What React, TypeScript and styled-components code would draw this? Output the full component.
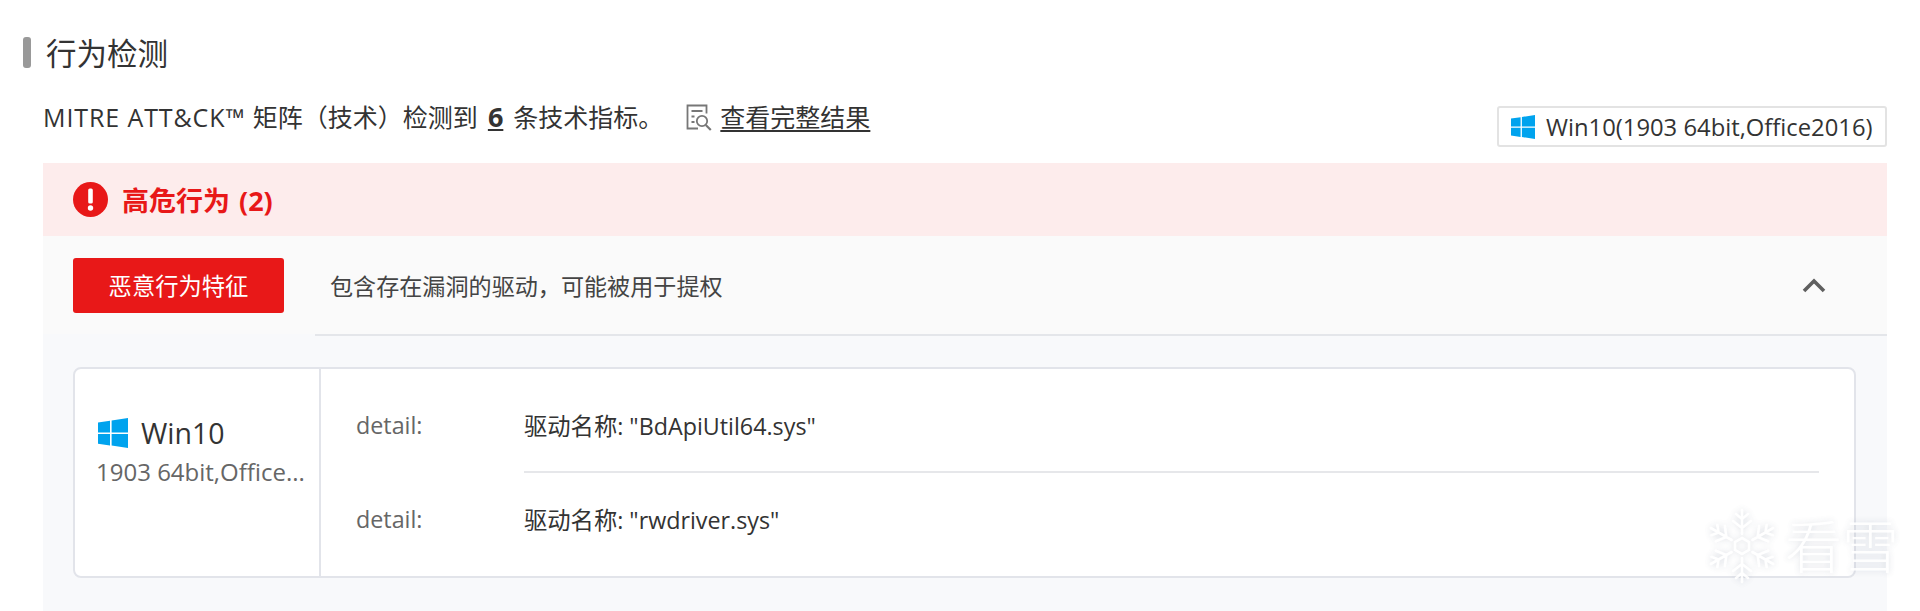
import React from "react";
import styled, { createGlobalStyle } from "styled-components";

const Global = createGlobalStyle`
  html, body { margin: 0; padding: 0; background: #fff; height: 611px; overflow: hidden; }
  body { font-family: "Open Sans", "Noto Sans CJK SC", sans-serif; color: #333; }
  * { box-sizing: border-box; }
`;

const Page = styled.div`
  position: relative;
  height: 611px;
  overflow: hidden;
  padding: 37px 33px 0 23px;
`;

const TitleRow = styled.div`
  display: flex;
  align-items: center;
  height: 31px;
  gap: 15px;
`;

const TitleBar = styled.span`
  width: 8px;
  height: 31px;
  border-radius: 3px;
  background: #999;
`;

const Title = styled.h2`
  margin: 0;
  font-size: 30.5px;
  line-height: 36px;
  font-weight: 400;
  color: #333;
`;

const Intro = styled.div`
  display: flex;
  justify-content: space-between;
  align-items: flex-start;
  height: 95px;
  padding: 33px 0 0 20px;
`;

const IntroText = styled.div`
  display: flex;
  align-items: center;
  font-size: 25px;
  line-height: 32px;
  white-space: nowrap;
  color: #333;
`;

const Latin = styled.span`
  letter-spacing: 0.9px;
  white-space: pre;
`;

const Count = styled.b`
  font-weight: 700;
  font-size: 27px;
  text-decoration: underline;
  margin: 0 10px;
`;

const FullLink = styled.a`
  display: inline-flex;
  align-items: center;
  gap: 8px;
  margin-left: 23px;
  color: #333;
  text-decoration: underline;
  text-underline-offset: 3px;
`;

const EnvBadge = styled.div`
  display: flex;
  align-items: center;
  gap: 11px;
  width: 390px;
  height: 41px;
  margin-top: 5px;
  padding-left: 12px;
  border: 2px solid #e3e3e3;
  border-radius: 3px;
  font-size: 23.8px;
  white-space: nowrap;
  color: #333;
`;

const Panel = styled.section`
  margin-left: 20px;
  background: #f8f9fb;
  height: 448px;
`;

const SeverityBar = styled.div`
  display: flex;
  align-items: center;
  gap: 14px;
  height: 73px;
  padding-left: 30px;
  background: #fdecec;
  color: #e81818;
  font-size: 27px;
  font-weight: 700;
  word-spacing: 2px;
`;

const BehaviorRow = styled.div`
  position: relative;
  display: flex;
  align-items: center;
  height: 98px;
  padding: 0 61px 0 30px;
  background: #fafafa;
  &::after {
    content: "";
    position: absolute;
    left: 272px;
    right: 0;
    bottom: -2px;
    height: 2px;
    background: #e4e6ea;
  }
`;

const Tag = styled.div`
  display: flex;
  align-items: center;
  justify-content: center;
  width: 211px;
  height: 55px;
  border-radius: 3px;
  background: #e81818;
  color: #fff;
  font-size: 23.3px;
`;

const BehaviorText = styled.div`
  flex: 1;
  margin-left: 46px;
  font-size: 23.1px;
  color: #444;
`;

const Card = styled.div`
  display: flex;
  height: 211px;
  margin: 33px 31px 0 30px;
  background: #fff;
  border: 2px solid #e2e4ea;
  border-radius: 8px;
`;

const EnvColumn = styled.div`
  width: 246px;
  flex: none;
  padding: 47px 0 0 23px;
  border-right: 2px solid #e2e4ea;
`;

const EnvName = styled.div`
  display: flex;
  align-items: center;
  gap: 13px;
  height: 34px;
  font-size: 28.5px;
  color: #333;
`;

const EnvVersion = styled.div`
  margin: 6px 0 0 -2px;
  font-size: 24px;
  line-height: 32px;
  color: #666;
  white-space: nowrap;
`;

const Details = styled.div`
  flex: 1;
  padding: 0 35px;
`;

const DetailRow = styled.div<{ $divided?: boolean }>`
  display: flex;
  align-items: center;
  height: 92px;
  margin-top: ${(p) => (p.$divided ? "0" : "10px")};
  font-size: 23.3px;
`;

const DetailLabel = styled.span`
  width: 168px;
  color: #666;
`;

const DetailValue = styled.span`
  color: #333;
`;

const RowDivider = styled.div`
  height: 2px;
  margin-left: 168px;
  background: #e6e7ea;
`;

const Watermark = styled.div`
  position: absolute;
  left: 1704px;
  top: 508px;
  display: flex;
  align-items: center;
  gap: 5px;
  pointer-events: none;
  opacity: 0.9;
  filter: drop-shadow(0 0 3px rgba(120, 130, 150, 0.28));
`;

const WatermarkText = styled.span`
  font-size: 57px;
  line-height: 76px;
  font-weight: 300;
  color: #fff;
  white-space: nowrap;
`;

const WinIcon = ({ size }: { size: number }) => (
  <svg width={size} height={size} viewBox="0 0 24 24" aria-hidden>
    <path fill="#00a3ee" d="M0 3.6 9.6 2.2v9.3H0zM10.9 2 24 0v11.5H10.9zM0 12.8h9.6v9.1L0 20.5zM10.9 12.8H24V24l-13.1-2z" />
  </svg>
);

const ReportIcon = () => (
  <svg width="26" height="27" viewBox="0 0 26 27" fill="none" stroke="#777" strokeWidth="1.8" aria-hidden>
    <path d="M12 24.5H1.5V1.5h19v8" />
    <path d="M5.5 7h11M5.5 12.5h3M5.5 18h3" />
    <circle cx="16" cy="17" r="5.2" />
    <path d="m19.8 21 5 5" strokeWidth="2.2" />
  </svg>
);

const AlertIcon = () => (
  <svg width="35" height="35" viewBox="0 0 35 35" aria-hidden>
    <circle cx="17.5" cy="17.5" r="17.5" fill="#e81818" />
    <rect x="15.2" y="6.5" width="4.6" height="15" rx="1.6" fill="#fff" />
    <circle cx="17.5" cy="26" r="2.7" fill="#fff" />
  </svg>
);

const Chevron = () => (
  <svg width="24" height="15" viewBox="0 0 24 15" fill="none" stroke="#5f5f5f" strokeWidth="3.6" aria-hidden>
    <path d="M2 13 12 3l10 10" />
  </svg>
);

const Snowflake = () => (
  <svg width="76" height="76" viewBox="-38 -38 76 76" fill="none" stroke="#fff" strokeWidth="2.6" strokeLinecap="round" aria-hidden>
    <polygon points="0,-8 7,-4 7,4 0,8 -7,4 -7,-4" />
    {[0, 60, 120, 180, 240, 300].map((a) => (
      <g key={a} transform={`rotate(${a})`}>
        <path d="M0-12V-36M0-18l-9-7M0-18l9-7M0-27l-6-5M0-27l6-5" />
      </g>
    ))}
  </svg>
);

export default function App() {
  return (
    <Page>
      <Global />
      <TitleRow>
        <TitleBar />
        <Title>行为检测</Title>
      </TitleRow>
      <Intro>
        <IntroText>
          <Latin>MITRE ATT&amp;CK™ </Latin>矩阵（技术）检测到<Count>6</Count>条技术指标。
          <FullLink>
            <ReportIcon />
            查看完整结果
          </FullLink>
        </IntroText>
        <EnvBadge>
          <WinIcon size={24} />
          Win10(1903 64bit,Office2016)
        </EnvBadge>
      </Intro>
      <Panel>
        <SeverityBar>
          <AlertIcon />
          高危行为 (2)
        </SeverityBar>
        <BehaviorRow>
          <Tag>恶意行为特征</Tag>
          <BehaviorText>包含存在漏洞的驱动，可能被用于提权</BehaviorText>
          <Chevron />
        </BehaviorRow>
        <Card>
          <EnvColumn>
            <EnvName>
              <WinIcon size={30} />
              Win10
            </EnvName>
            <EnvVersion>1903 64bit,Office...</EnvVersion>
          </EnvColumn>
          <Details>
            <DetailRow>
              <DetailLabel>detail:</DetailLabel>
              <DetailValue>驱动名称: "BdApiUtil64.sys"</DetailValue>
            </DetailRow>
            <RowDivider />
            <DetailRow $divided>
              <DetailLabel>detail:</DetailLabel>
              <DetailValue>驱动名称: "rwdriver.sys"</DetailValue>
            </DetailRow>
          </Details>
        </Card>
      </Panel>
      <Watermark>
        <Snowflake />
        <WatermarkText>看雪</WatermarkText>
      </Watermark>
    </Page>
  );
}
